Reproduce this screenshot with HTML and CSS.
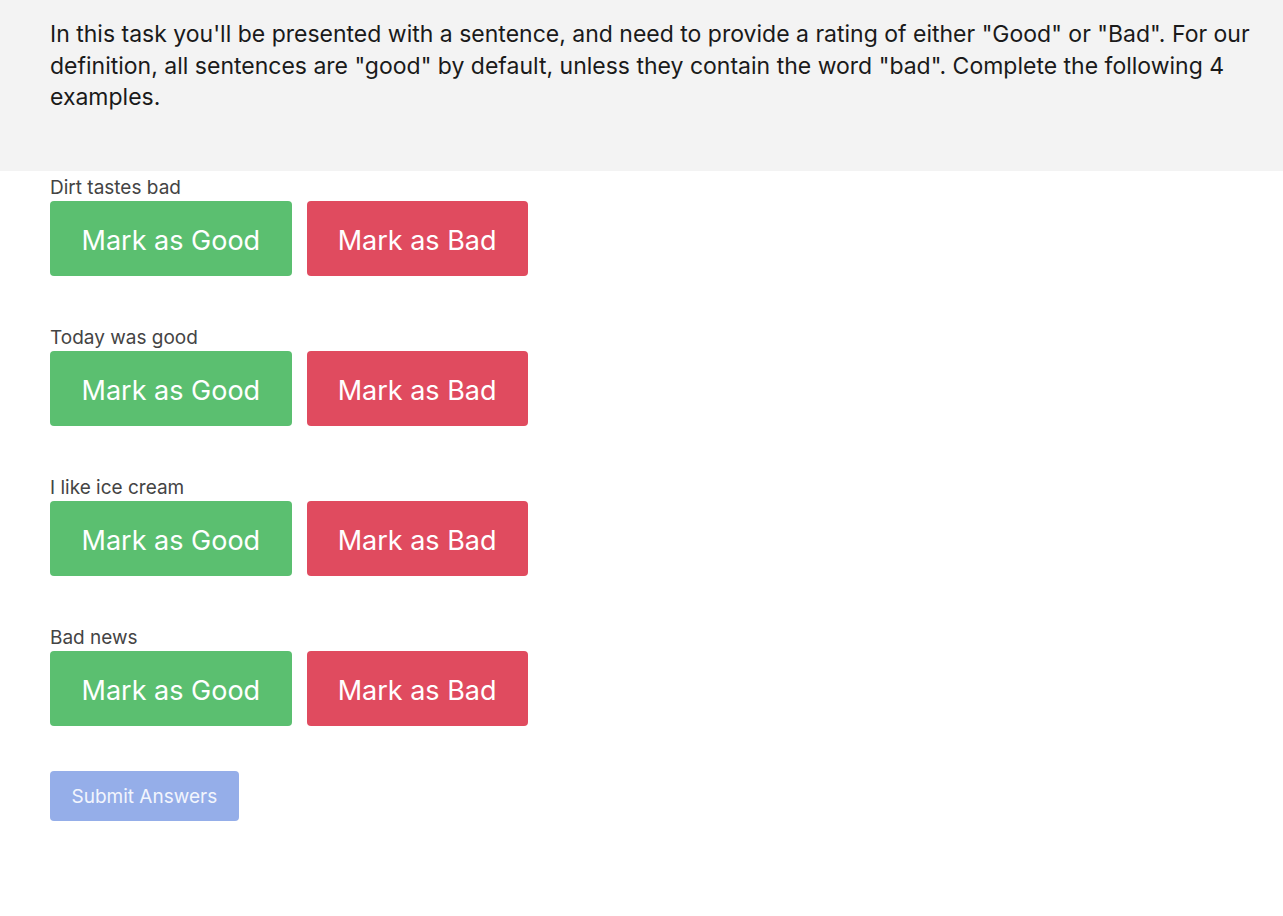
FILE: index.html
```html
<!DOCTYPE html>
<html>
<head>
<meta charset="utf-8">
<link rel="stylesheet" href="styles.css">
</head>
<body>
<header class="intro">
  <p>In this task you'll be presented with a sentence, and need to provide a rating of either "Good" or "Bad". For our definition, all sentences are "good" by default, unless they contain the word "bad". Complete the following 4 examples.</p>
</header>
<main class="tasks">
  <section class="item">
    <div class="label">Dirt tastes bad</div>
    <div class="actions"><button class="btn good">Mark as Good</button><button class="btn bad">Mark as Bad</button></div>
  </section>
  <section class="item">
    <div class="label">Today was good</div>
    <div class="actions"><button class="btn good">Mark as Good</button><button class="btn bad">Mark as Bad</button></div>
  </section>
  <section class="item">
    <div class="label">I like ice cream</div>
    <div class="actions"><button class="btn good">Mark as Good</button><button class="btn bad">Mark as Bad</button></div>
  </section>
  <section class="item">
    <div class="label">Bad news</div>
    <div class="actions"><button class="btn good">Mark as Good</button><button class="btn bad">Mark as Bad</button></div>
  </section>
  <button class="submit" disabled>Submit Answers</button>
</main>
</body>
</html>
```
FILE: styles.css
```css
html, body { margin: 0; padding: 0; background: #fff; }
body { font-family: Inter, "Noto Sans", sans-serif; color: #212529; }
.intro {
  background: #f3f3f3;
  height: 171px;
  box-sizing: border-box;
  padding: 19px 30px 0 50px;
}
.intro p { margin: 0; font-size: 23px; line-height: 31.5px; color: #1a1a1a; }
.tasks { padding: 5px 50px 0; display: flex; flex-direction: column; align-items: flex-start; }
.item { margin-bottom: 50px; }
.label { font-size: 19px; line-height: 25px; color: #444; margin-top: -1px; padding-bottom: 1px; }
.actions { display: flex; gap: 15px; }
.btn {
  font-family: inherit;
  font-size: 27px;
  line-height: 35px;
  padding: 22px 31.5px 18px;
  border: none;
  border-radius: 4px;
  color: #fff;
  cursor: pointer;
}
.good { background: #5bbf70; }
.bad { background: #e04b5f; padding-left: 31px; padding-right: 31px; }
.submit {
  margin-top: -5px;
  font-family: inherit;
  font-size: 19px;
  line-height: 26px;
  padding: 13px 21.5px 11px;
  border: none;
  border-radius: 4px;
  background: #95aee9;
  color: #f2f5fd;
}
```
